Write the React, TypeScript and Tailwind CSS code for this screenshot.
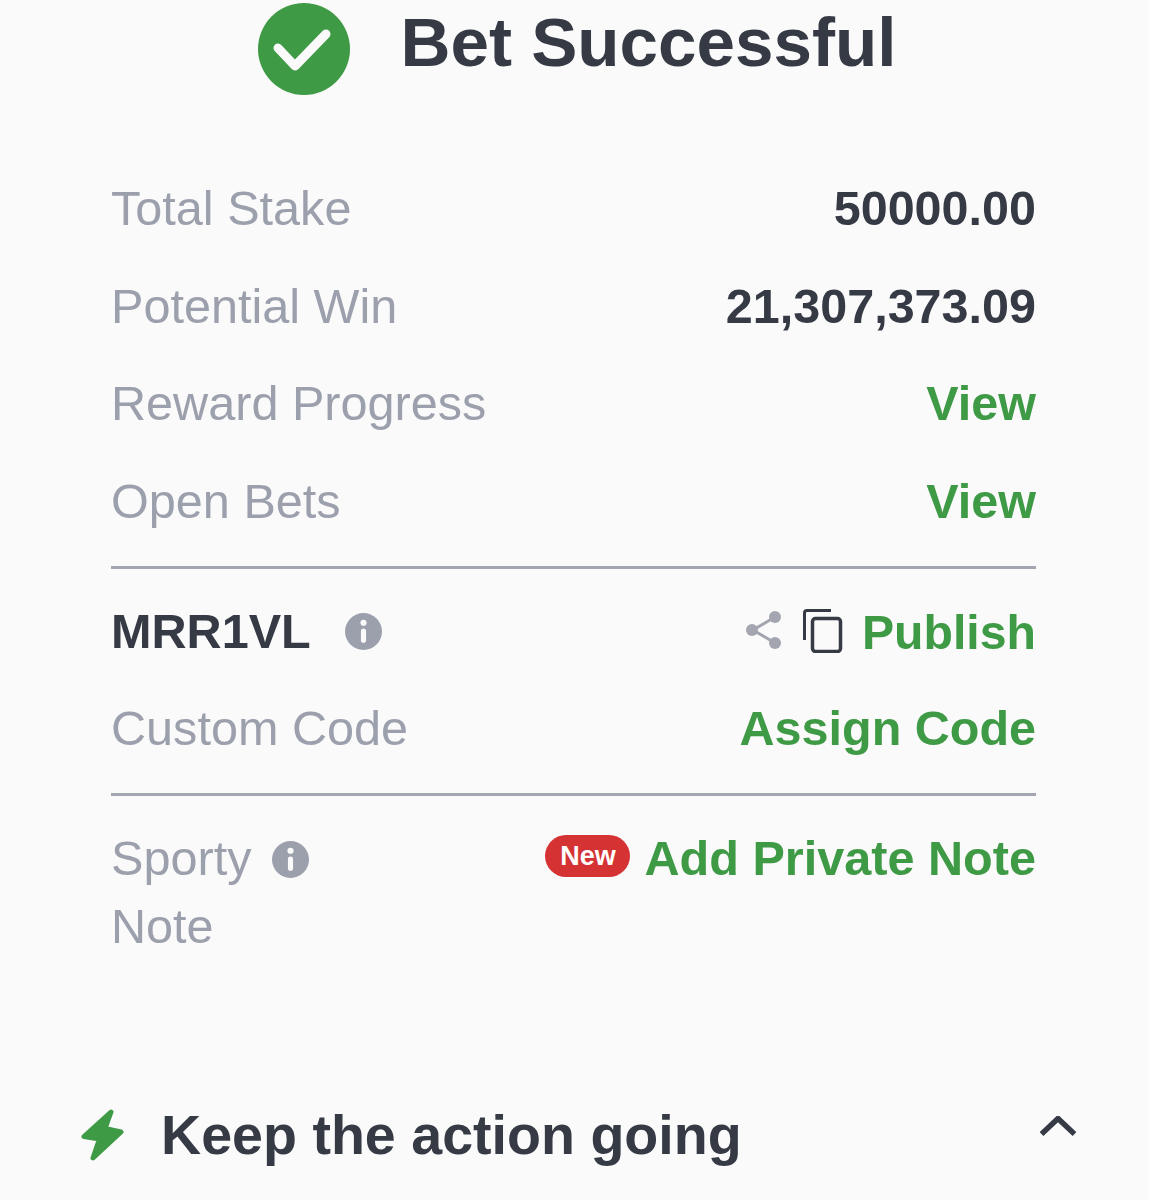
import React from 'react';

function InfoIcon({ className }: { className: string }) {
  return (
    <svg viewBox="0 0 36 36" className={className}>
      <circle cx="18" cy="18" r="18" fill="#9ca0ad" />
      <circle cx="18" cy="9.5" r="3" fill="#fafafa" />
      <rect x="15.5" y="15" width="5" height="14" rx="2.5" fill="#fafafa" />
    </svg>
  );
}

function Row({ label, value, green }: { label: string; value: string; green?: boolean }) {
  return (
    <div className="flex h-[97.5px] items-center justify-between">
      <span className="text-[48.6px] text-[#9ca0ad]">{label}</span>
      <span className={`text-[48.5px] font-bold ${green ? 'text-[#3f9a45]' : 'text-[#353a45]'}`}>{value}</span>
    </div>
  );
}

export default function App() {
  return (
    <div className="h-[1200px] overflow-hidden bg-[#fafafa] font-['Liberation_Sans',Arial,sans-serif]">
      {/* Header */}
      <div className="flex h-[97px] items-start justify-center gap-[50px] pl-[6px] pt-[3px]">
        <svg viewBox="0 0 92 92" className="h-[92px] w-[92px] shrink-0">
          <circle cx="46" cy="46" r="46" fill="#3f9a45" />
          <path d="M20 45 L37 63 L68 31" fill="none" stroke="#fafafa" strokeWidth="9" strokeLinecap="round" strokeLinejoin="round" />
        </svg>
        <h1 className="mt-[-4px] text-[69.2px] leading-[86px] font-bold text-[#353a45]">Bet Successful</h1>
      </div>

      <div className="pl-[111px] pr-[113px] pt-[63px]">
        <Row label="Total Stake" value="50000.00" />
        <Row label="Potential Win" value="21,307,373.09" />
        <Row label="Reward Progress" value="View" green />
        <Row label="Open Bets" value="View" green />

        <div className="mt-[16px] h-[3px] bg-[#a3a6b0]" />

        <div className="mt-[15px] flex h-[95.5px] items-center justify-between">
          <div className="flex items-center gap-[34px]">
            <span className="text-[48.6px] font-bold text-[#353a45]">MRR1VL</span>
            <InfoIcon className="h-[37px] w-[37px]" />
          </div>
          <div className="flex items-center">
            <svg viewBox="0 0 36 38" className="mb-[3px] h-[38px] w-[36px]">
              <path d="M29 6 L7 19 L29 32" fill="none" stroke="#a3a6b0" strokeWidth="3" />
              <circle cx="29" cy="6" r="6" fill="#a3a6b0" />
              <circle cx="6" cy="19" r="6" fill="#a3a6b0" />
              <circle cx="29" cy="32" r="6" fill="#a3a6b0" />
            </svg>
            <svg viewBox="0 0 40 44" className="mb-[2px] ml-[21px] h-[44px] w-[40px]">
              <path d="M1.5 31 V4 Q1.5 1.5 4 1.5 H28" fill="none" stroke="#353a45" strokeWidth="3" />
              <rect x="9.5" y="9.5" width="28" height="33" rx="3" fill="none" stroke="#353a45" strokeWidth="3.5" />
            </svg>
            <span className="ml-[19px] text-[48.2px] font-bold text-[#3f9a45]">Publish</span>
          </div>
        </div>

        <Row label="Custom Code" value="Assign Code" green />

        <div className="mt-[16px] h-[3px] bg-[#a3a6b0]" />

        <div className="mt-[28px] flex items-start justify-between">
          <div className="w-[230px] text-[48.6px] leading-[68px] text-[#9ca0ad]">
            Sporty
            <InfoIcon className="ml-[21px] inline-block h-[37px] w-[37px] align-[-3px]" />
            <br />
            Note
          </div>
          <div className="flex h-[68px] items-center">
            <span className="mb-[4px] flex h-[42px] w-[85px] items-center justify-center rounded-full bg-[#d53234] text-[27px] font-bold text-white">New</span>
            <span className="ml-[14px] text-[48.6px] font-bold text-[#3f9a45]">Add Private Note</span>
          </div>
        </div>
      </div>

      {/* Keep the action going */}
      <div className="mt-[146px] flex h-[60px] items-center pl-[80px] pr-[73px]">
        <svg viewBox="0 0 44 54" className="mb-[4px] h-[54px] w-[44px] shrink-0">
          <path d="M31 5 L4 29.500 L19.500 32 L13 51 L41 25 L25 21.500 Z" fill="#3f9a45" stroke="#3f9a45" strokeWidth="5" strokeLinejoin="round" />
        </svg>
        <span className="ml-[37px] text-[55.6px] font-bold text-[#353a45]">Keep the action going</span>
        <svg viewBox="0 0 36 20" className="mb-[21px] ml-auto h-[20px] w-[36px]">
          <path d="M1.500 18 L18 2.500 L34.500 18" fill="none" stroke="#353a45" strokeWidth="5.500" />
        </svg>
      </div>
    </div>
  );
}
